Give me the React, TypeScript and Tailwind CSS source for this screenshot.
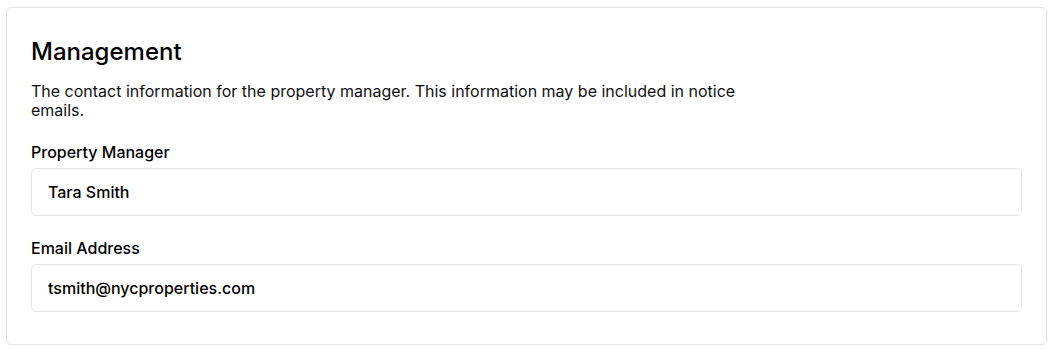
export default function App() {
  return (
    <div className="min-h-[350px] bg-white pt-[7px] pl-[6px] pr-[8px] pb-[5px] font-['Inter',sans-serif] text-black">
      <section className="rounded-[5px] border border-[#e4e4e4] px-6 pt-[28px] pb-[32px]">
        <h2 className="text-[24px] leading-[32px] font-medium">Management</h2>
        <p className="mt-[14px] max-w-[712px] text-[16px] leading-[19px] text-[#111]">
          The contact information for the property manager. This information may be included in notice emails.
        </p>
        <div className="mt-[22px] flex flex-col gap-[22px]">
          <label className="flex flex-col">
            <span className="text-[16px] leading-[20px] font-medium">Property Manager</span>
            <input
              readOnly
              value="Tara Smith"
              className="mt-[6px] h-[48px] rounded-[5px] border border-[#e4e4e4] px-4 text-[16px] font-medium text-black outline-none"
            />
          </label>
          <label className="flex flex-col">
            <span className="text-[16px] leading-[20px] font-medium">Email Address</span>
            <input
              readOnly
              value="tsmith@nycproperties.com"
              className="mt-[6px] h-[48px] rounded-[5px] border border-[#e4e4e4] px-4 text-[16px] font-medium text-black outline-none"
            />
          </label>
        </div>
      </section>
    </div>
  );
}
